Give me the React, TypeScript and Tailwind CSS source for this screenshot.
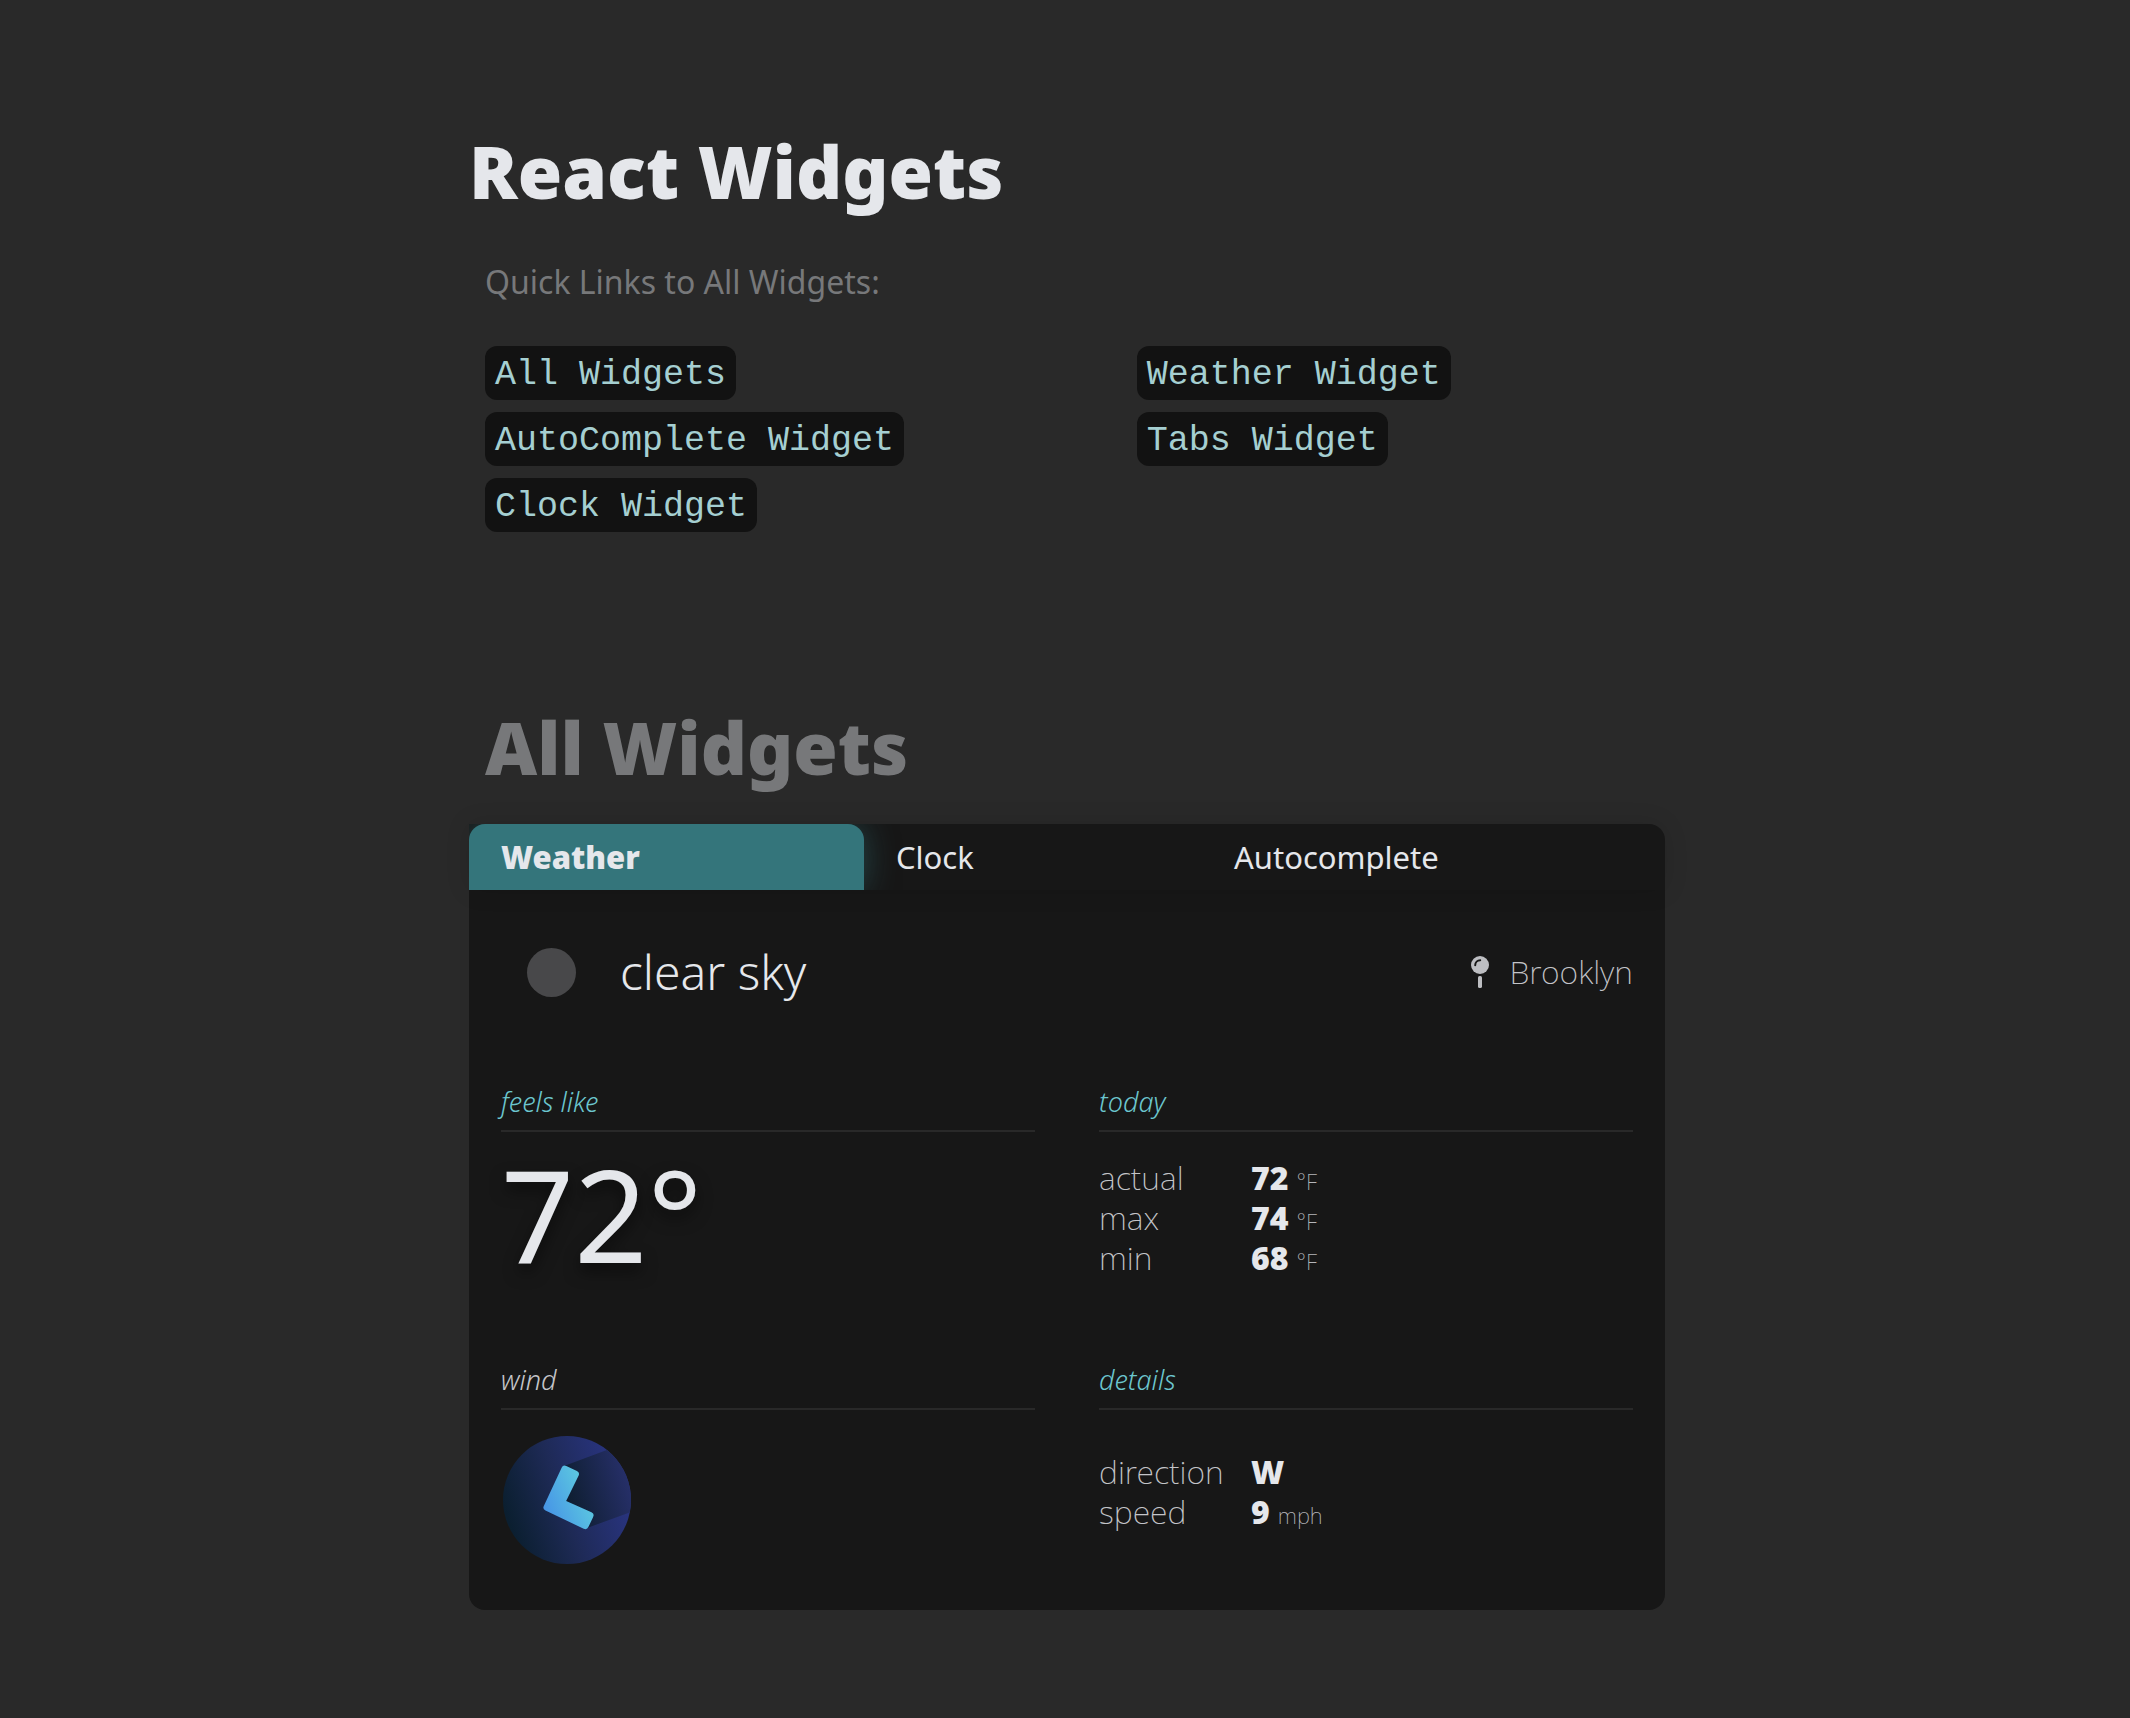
import type { ReactNode } from "react";

const links = [
  { label: "All Widgets", href: "#all" },
  { label: "Weather Widget", href: "#weather" },
  { label: "AutoComplete Widget", href: "#autocomplete" },
  { label: "Tabs Widget", href: "#tabs" },
  { label: "Clock Widget", href: "#clock" },
];

function Pin() {
  return (
    <svg aria-hidden="true" viewBox="0 0 18 32" className="h-8 w-[18px] fill-[#bdbec2]">
      <circle cx="9" cy="9" r="9" />
      <path d="M4.2 9.2A5 5 0 0 1 9.2 4.2" fill="none" stroke="#171717" strokeWidth="2" strokeLinecap="round" />
      <rect x="7" y="20" width="4" height="12" rx="1.6" />
    </svg>
  );
}

function WindArrow() {
  return (
    <svg role="img" aria-label="Wind from the west" viewBox="0 0 128 128" className="ml-[2px] size-32">
      <defs>
        <linearGradient id="disc" x1="4" y1="80" x2="112" y2="44" gradientUnits="userSpaceOnUse">
          <stop offset="0" stopColor="#0b1f30" />
          <stop offset="0.5" stopColor="#1e2a56" />
          <stop offset="1" stopColor="#28337c" />
        </linearGradient>
        <linearGradient id="shade" x1="64" y1="64" x2="126" y2="46" gradientUnits="userSpaceOnUse">
          <stop offset="0" stopColor="#0e1e30" />
          <stop offset="1" stopColor="#262f68" />
        </linearGradient>
        <linearGradient id="arrow" x1="42" y1="72" x2="84" y2="54" gradientUnits="userSpaceOnUse">
          <stop offset="0" stopColor="#4796e6" />
          <stop offset="1" stopColor="#5cc8e0" />
        </linearGradient>
        <clipPath id="round">
          <circle cx="64" cy="64" r="64" />
        </clipPath>
      </defs>
      <g clipPath="url(#round)">
        <rect width="128" height="128" fill="url(#disc)" />
        <path d="M61 30L128 5V76L84 92L56 66Z" fill="url(#shade)" />
      </g>
      <path
        d="M61.8 33.2L72.4 38.2L58.4 66.6L87 79.4L82.2 89.6L44 71.4Z"
        fill="url(#arrow)"
        stroke="url(#arrow)"
        strokeWidth="7"
        strokeLinejoin="round"
      />
    </svg>
  );
}

function Section({ title, muted, children }: { title: string; muted?: boolean; children: ReactNode }) {
  return (
    <section>
      <h3
        className={
          muted
            ? "border-b-2 border-[#292929] pb-[10px] text-[27px] leading-9 font-light italic text-[#c4c5c9]"
            : "border-b-2 border-[#292929] pb-[10px] text-[27px] leading-9 font-light italic text-[#6cc6ce]"
        }
      >
        {title}
      </h3>
      <div className="pt-[26px]">{children}</div>
    </section>
  );
}

function Row({ label, value, unit }: { label: string; value: string; unit?: string }) {
  return (
    <div className="grid grid-cols-[152px_1fr] leading-10">
      <dt className="text-[32px] font-extralight text-[#c4c5c9]">{label}</dt>
      <dd className="flex items-baseline gap-2 text-[32px] font-black text-[#e5e7eb]">
        {value}
        {unit && <span className="text-[22px] leading-none font-extralight text-[#b4b5b9]">{unit}</span>}
      </dd>
    </div>
  );
}

export default function App() {
  return (
    <div className="min-h-screen bg-[#292929] pt-[126px] pb-[108px] pl-1 font-['Noto_Sans',sans-serif] text-[#e5e7eb]">
      <main className="mx-auto max-w-[1196px]">
        <h1 className="text-[72px] leading-[90px] font-black">React Widgets</h1>

        <nav aria-labelledby="quick-links" className="px-4 pt-[42px]">
          <p id="quick-links" className="text-[32px] leading-[48px] text-[#77787a]">
            Quick Links to All Widgets:
          </p>
          <ul className="mt-10 grid grid-cols-[56fr_44fr] gap-y-3">
            {links.map((link) => (
              <li key={link.label} className="flex">
                <a
                  href={link.href}
                  className="rounded-xl bg-[#121212] px-[10px] pt-1 font-['Liberation_Mono',monospace] text-[35px] leading-[50px] text-[#a5cfd1]"
                >
                  {link.label}
                </a>
              </li>
            ))}
          </ul>
        </nav>

        <h2 className="mt-[170px] pl-4 text-[72px] leading-[90px] font-black text-[#77787a]">All Widgets</h2>

        <div className="mt-8">
          <div
            role="tablist"
            aria-label="Widgets"
            className="relative grid h-[66px] grid-cols-[395fr_338fr_463fr] overflow-hidden rounded-tr-2xl bg-[#171717] text-[31px] shadow-[0_0_24px_rgba(0,0,0,0.12)]"
          >
            <button
              role="tab"
              aria-selected="true"
              className="rounded-t-2xl bg-[#34757b] px-8 text-left text-[31px] font-black shadow-[0_0_32px_rgba(52,117,123,0.5)]"
            >
              Weather
            </button>
            <button role="tab" aria-selected="false" className="px-8 text-left">
              Clock
            </button>
            <button role="tab" aria-selected="false" className="px-8 text-left">
              Autocomplete
            </button>
          </div>

          <div role="tabpanel" aria-label="Weather" className="rounded-b-2xl bg-[#171717] px-8 pt-8 pb-[46px]">
            <div className="flex h-[100px] items-center">
              <span role="img" aria-label="clear" className="ml-[26px] size-[49px] rounded-full bg-[#48484a]" />
              <p className="ml-11 text-5xl font-light">clear sky</p>
              <p className="ml-auto flex items-center gap-5 text-[32px] leading-10 font-extralight text-[#c4c5c9]">
                <Pin />
                Brooklyn
              </p>
            </div>

            <div className="mt-[62px] grid grid-cols-2 gap-x-16 gap-y-[84px]">
              <Section title="feels like">
                <p className="text-[128px] leading-[112px] [text-shadow:0_8px_16px_rgba(0,0,0,0.5)]">72°</p>
              </Section>
              <Section title="today">
                <dl>
                  <Row label="actual" value="72" unit="°F" />
                  <Row label="max" value="74" unit="°F" />
                  <Row label="min" value="68" unit="°F" />
                </dl>
              </Section>
              <Section title="wind" muted>
                <WindArrow />
              </Section>
              <Section title="details">
                <dl className="pt-4">
                  <Row label="direction" value="W" />
                  <Row label="speed" value="9" unit="mph" />
                </dl>
              </Section>
            </div>
          </div>
        </div>
      </main>
    </div>
  );
}
